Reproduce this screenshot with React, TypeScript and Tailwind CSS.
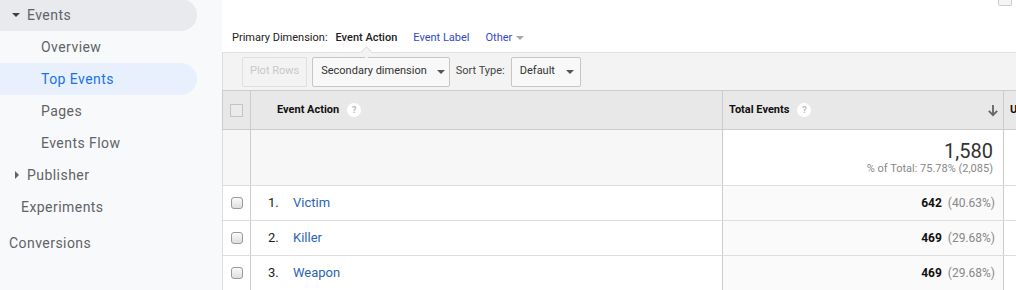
import React from 'react';

const navItems = [
  { label: 'Events', level: 'group', open: true },
  { label: 'Overview', level: 'sub' },
  { label: 'Top Events', level: 'sub', active: true },
  { label: 'Pages', level: 'sub' },
  { label: 'Events Flow', level: 'sub' },
  { label: 'Publisher', level: 'group', open: false },
  { label: 'Experiments', level: 'item' },
];

const rows = [
  { n: 1, name: 'Victim', value: '642', pct: '(40.63%)' },
  { n: 2, name: 'Killer', value: '469', pct: '(29.68%)' },
  { n: 3, name: 'Weapon', value: '469', pct: '(29.68%)' },
];

const Help = () => (
  <span className="ml-[8px] inline-flex h-[14px] w-[14px] items-center justify-center rounded-full bg-white text-[9px] font-bold leading-none text-[#bbb]">
    ?
  </span>
);

const Caret = ({ className }: { className?: string }) => (
  <svg viewBox="0 0 8 4" className={className} fill="currentColor">
    <path d="M0 0h8L4 4z" />
  </svg>
);

const Sidebar = () => (
  <aside className="w-[222px] shrink-0 bg-[#f8f9fa] font-['Roboto',sans-serif] text-[14px] tracking-[0.45px] text-[#5f6368]">
    <div className="-mt-px">
      {navItems.map((item) => (
        <div
          key={item.label}
          className={
            'flex h-8 w-[197px] items-center rounded-r-full ' +
            (item.active ? 'bg-[#e8f0fe] text-[#1a73e8] ' : '') +
            (item.open ? 'bg-[#e8eaed] ' : '') +
            (item.level === 'sub' ? 'pl-[41px]' : item.level === 'item' ? 'pl-[21px]' : 'pl-[12px]')
          }
        >
          {item.level === 'group' &&
            (item.open ? (
              <Caret className="mr-[7px] h-[4px] w-[8px] text-[#3c4043]" />
            ) : (
              <svg viewBox="0 0 4 8" className="mr-[8px] ml-[3px] h-[8px] w-[4px] text-[#5f6368]" fill="currentColor">
                <path d="M0 0v8l4-4z" />
              </svg>
            ))}
          <span>{item.label}</span>
        </div>
      ))}
      <div className="mt-[4px] flex h-8 items-center pl-[9px]">Conversions</div>
    </div>
  </aside>
);

const Button = ({ children, disabled, className }: { children: React.ReactNode; disabled?: boolean; className?: string }) => (
  <div
    className={
      'flex h-[30px] items-center rounded-[2px] border text-[11px] ' +
      (disabled ? 'border-[#e0e0e0] text-[#c8c8c8] ' : 'border-[#c6c6c6] bg-[#f8f8f8] text-[#333] ') +
      (className ?? '')
    }
  >
    {children}
  </div>
);

export default function App() {
  return (
    <div className="flex h-[290px] w-[1016px] overflow-hidden bg-white">
      <Sidebar />
      <main className="flex min-w-0 flex-1 flex-col overflow-hidden font-['Roboto',sans-serif] text-[#222]">
        {/* primary dimension */}
        <div className="relative h-[53px] shrink-0 border-b border-[#e0e0e0]">
          <div className="flex justify-end pr-[4px]">
            <div className="h-[6px] w-[14px] rounded-b-[2px] border border-t-0 border-[#ccc] bg-[#f5f5f5]" />
          </div>
          <div className="mt-[24px] flex items-center pl-[10px] text-[11px]">
            <span className="text-[#222]">Primary Dimension:</span>
            <span className="ml-[8px] font-medium text-[#222]">Event Action</span>
            <span className="ml-[16px] text-[#3547c9]">Event Label</span>
            <span className="ml-[16px] flex items-center text-[#3547c9]">
              Other
              <Caret className="ml-[4px] h-[4px] w-[8px] text-[#aaa]" />
            </span>
          </div>
          <div className="absolute bottom-[-5px] left-[140px] h-[9px] w-[9px] rotate-45 border-l border-t border-[#e0e0e0] bg-[#f3f3f3]" />
        </div>

        {/* toolbar */}
        <div className="flex h-[37px] shrink-0 items-center border-l border-[#ddd] bg-[#f3f3f3] pl-[19px]">
          <Button disabled className="px-[7px]">Plot Rows</Button>
          <Button className="ml-[5px] pl-[8px] pr-[4px]">
            Secondary dimension
            <Caret className="ml-[10px] h-[4px] w-[8px] text-[#555]" />
          </Button>
          <span className="ml-[6px] text-[11px] text-[#444]">Sort Type:</span>
          <Button className="ml-[6px] pl-[8px] pr-[6px]">
            Default
            <Caret className="ml-[11px] h-[4px] w-[8px] text-[#555]" />
          </Button>
        </div>

        {/* table header */}
        <div className="flex h-[40px] shrink-0 border-y border-l border-[#ccc] bg-[#e8e8e8] text-[11px] font-bold text-[#111]">
          <div className="flex w-[28px] shrink-0 items-center justify-center border-r border-[#ccc]">
            <div className="h-[13px] w-[13px] border border-[#c4c4c4] bg-[#ebebeb]" />
          </div>
          <div className="flex w-[472px] shrink-0 items-center border-r border-[#ccc] pl-[26px]">
            Event Action
            <Help />
          </div>
          <div className="flex w-[281px] shrink-0 items-center border-r border-[#ccc] pl-[6px] pr-[4px]">
            Total Events
            <Help />
            <svg viewBox="0 0 12 14" className="ml-auto h-[13px] w-[12px] text-[#666]" fill="none" stroke="currentColor" strokeWidth="2">
              <path d="M6 1v11M1.5 7.5 6 12l4.5-4.5" />
            </svg>
          </div>
          <div className="flex min-w-0 flex-1 items-center overflow-hidden whitespace-nowrap pl-[6px]">Unique Events</div>
        </div>

        {/* totals */}
        <div className="flex h-[56px] shrink-0 border-b border-l border-[#ddd]">
          <div className="w-[28px] shrink-0 border-r border-[#ccc] bg-[#f7f7f7]" />
          <div className="w-[472px] shrink-0 border-r border-[#ccc] bg-[#f7f7f7]" />
          <div className="flex w-[281px] shrink-0 flex-col items-end border-r border-[#ccc] bg-white pr-[10px] pt-[9px]">
            <span className="text-[20px] leading-[24px] text-[#333]">1,580</span>
            <span className="text-[11px] leading-[12px] text-[#888]">% of Total: 75.78% (2,085)</span>
          </div>
          <div className="flex-1 bg-white" />
        </div>

        {/* rows */}
        {rows.map((r) => (
          <div key={r.n} className="flex h-[35px] shrink-0 border-b border-l border-[#ddd]">
            <div className="flex w-[28px] shrink-0 items-center justify-center border-r border-[#ccc] bg-white">
              <div className="h-[12px] w-[12px] rounded-[3px] border border-[#999] bg-gradient-to-b from-[#fafafa] to-[#dedede]" />
            </div>
            <div className="flex w-[472px] shrink-0 items-center border-r border-[#ccc] bg-white pl-[17px] text-[13px]">
              <span className="w-[25px] text-[#222]">{r.n}.</span>
              <span className="text-[#2a64b4]">{r.name}</span>
            </div>
            <div className="flex w-[281px] shrink-0 items-center justify-end border-r border-[#ccc] bg-[#fafafa] pr-[8px]">
              <span className="text-[12px] font-bold text-[#111]">{r.value}</span>
              <span className="ml-[6px] text-[12px] text-[#888]">{r.pct}</span>
            </div>
            <div className="flex-1 bg-white" />
          </div>
        ))}
      </main>
    </div>
  );
}
